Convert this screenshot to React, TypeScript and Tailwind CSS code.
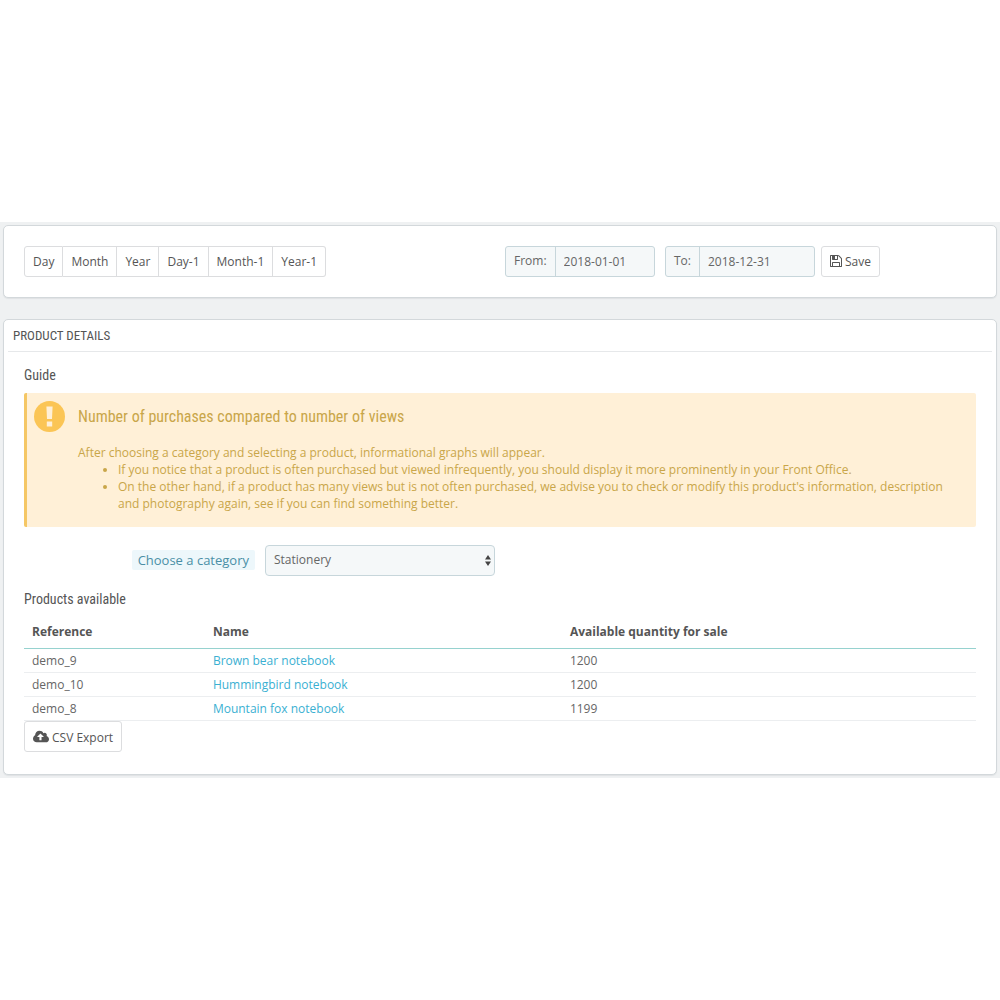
import React, { useState } from "react";

const ranges = ["Day", "Month", "Year", "Day-1", "Month-1", "Year-1"];

const products = [
    { reference: "demo_9", name: "Brown bear notebook", quantity: 1200 },
    { reference: "demo_10", name: "Hummingbird notebook", quantity: 1200 },
    { reference: "demo_8", name: "Mountain fox notebook", quantity: 1199 },
];

const panelStyle = "rounded-[5px] border border-[#d3d8db] bg-white shadow-[0_1px_1px_#dfe2e4]";
const buttonStyle =
    "flex h-[31px] cursor-pointer items-center gap-[3px] rounded-[3px] border border-[#dcdddf] bg-white px-2 pt-0.5 text-[#555] hover:bg-gray-50";
const condensed = "font-['Ubuntu_Condensed','Roboto_Condensed',sans-serif] font-normal";
const headingStyle = `${condensed} text-[#555]`;

function SaveIcon() {
    return (
        <svg className="mb-0.5 size-3" viewBox="0 128 1536 1536" fill="currentColor" aria-hidden="true">
            <path d="M384 1536h768v-384h-768v384zm896 0h128v-896q0-14-10-38.5t-20-34.5l-281-281q-10-10-34-20t-39-10v416q0 40-28 68t-68 28h-576q-40 0-68-28t-28-68v-416h-128v1280h128v-416q0-40 28-68t68-28h832q40 0 68 28t28 68v416zm-384-928v-320q0-13-9.5-22.5t-22.5-9.5h-192q-13 0-22.5 9.5t-9.5 22.5v320q0 13 9.5 22.5t22.5 9.5h192q13 0 22.5-9.5t9.5-22.5zm640 32v928q0 40-28 68t-68 28h-1344q-40 0-68-28t-28-68v-1344q0-40 28-68t68-28h928q40 0 88 20t76 48l280 280q28 28 48 76t20 88z" />
        </svg>
    );
}

function CloudUploadIcon() {
    return (
        <svg className="mb-0.5 h-[15px] w-4" viewBox="0 0 1920 1792" fill="currentColor" aria-hidden="true">
            <path d="M1280 928q0-14-9-23l-352-352q-9-9-23-9t-23 9l-351 351q-10 12-10 24 0 14 9 23t23 9h224v352q0 13 9.5 22.5t22.5 9.5h192q13 0 22.5-9.5t9.5-22.5v-352h224q13 0 22.5-9.5t9.5-22.5zm640 288q0 159-112.5 271.5t-271.5 112.5h-1088q-185 0-316.5-131.5t-131.5-316.5q0-130 70-240t188-165q-2-30-2-43 0-212 150-362t362-150q156 0 285.5 87t188.5 231q71-62 166-62 106 0 181 75t75 181q0 76-41 138 130 31 213.5 135.5t83.5 238.5z" />
        </svg>
    );
}

function WarningIcon() {
    return (
        <svg className="size-[31px] shrink-0" viewBox="0 0 31 31" aria-hidden="true">
            <circle cx="15.5" cy="15.5" r="15.5" fill="#fbc555" />
            <path d="M12.4 5.5h6.2l-.6 12.6h-5zM12.8 20.4h5.4v5.2h-5.4z" fill="#fff0d7" />
        </svg>
    );
}

type DateFieldProps = { id: string; label: string; initial: string };

function DateField({ id, label, initial }: DateFieldProps) {
    const [value, setValue] = useState(initial);
    return (
        <div className="flex h-[31px] w-[150px] rounded-[3px] border border-[#c7d6db] bg-[#f5f8f9] text-[#666]">
            <label htmlFor={id} className="flex items-center border-r border-[#c7d6db] px-2">
                {label}
            </label>
            <input
                id={id}
                type="text"
                value={value}
                onChange={(e) => setValue(e.target.value)}
                className="w-full min-w-0 px-2 pt-0.5 outline-none"
            />
        </div>
    );
}

function Toolbar() {
    return (
        <div className={`${panelStyle} grid gap-[10px] px-5 py-5 md:grid-cols-2`}>
            <div className="flex">
                {ranges.map((range) => (
                    <button
                        key={range}
                        type="button"
                        className="h-[31px] cursor-pointer border-y border-r border-[#dcdddf] px-2 pt-0.5 text-[#555] first:rounded-l-[3px] first:border-l last:rounded-r-[3px] hover:bg-gray-50"
                    >
                        {range}
                    </button>
                ))}
            </div>
            <form className="flex" onSubmit={(e) => e.preventDefault()}>
                <div className="mr-[6px] flex gap-[10px]">
                    <DateField id="date-from" label="From:" initial="2018-01-01" />
                    <DateField id="date-to" label="To:" initial="2018-12-31" />
                </div>
                <button type="submit" className={buttonStyle}>
                    <SaveIcon />
                    Save
                </button>
            </form>
        </div>
    );
}

function Guide() {
    return (
        <div className="flex gap-[13px] rounded-[2px] border-l-[3px] border-[#f5c765] bg-[#fff0d7] pt-2 pr-5 pb-[15px] pl-[7px] text-[#c9a649]">
            <WarningIcon />
            <div className="leading-[17px]">
                <h4 className={`${condensed} mt-1 mb-[15px] text-[16px] leading-6`}>
                    Number of purchases compared to number of views
                </h4>
                <p>After choosing a category and selecting a product, informational graphs will appear.</p>
                <ul className="list-disc pl-10">
                    <li>
                        If you notice that a product is often purchased but viewed infrequently, you should display it
                        more prominently in your Front Office.
                    </li>
                    <li>
                        On the other hand, if a product has many views but is not often purchased, we advise you to
                        check or modify this product's information, description and photography again, see if you can
                        find something better.
                    </li>
                </ul>
            </div>
        </div>
    );
}

function CategoryFilter() {
    return (
        <div className="flex items-center pt-[18px]">
            <div className="flex w-[231px] justify-end">
                <label htmlFor="category" className="rounded-[2px] bg-[#edf7fb] px-[6px] text-[13px] leading-5 text-[#4a8fa6]">
                    Choose a category
                </label>
            </div>
            <div className="relative ml-[10px] w-[230px]">
                <select
                    id="category"
                    defaultValue="Stationery"
                    className="h-[31px] w-full appearance-none rounded-[4px] border border-[#c7d6db] bg-[#f5f8f9] px-2 text-[#666]"
                >
                    <option>Stationery</option>
                    <option>Art</option>
                    <option>Accessories</option>
                </select>
                <svg
                    className="pointer-events-none absolute top-[10px] right-1 h-[11px] w-[6px]"
                    viewBox="0 0 6 11"
                    fill="#444"
                    aria-hidden="true"
                >
                    <path d="M3 0l3 4.5H0zM3 11L0 6.5h6z" />
                </svg>
            </div>
        </div>
    );
}

function ProductsTable() {
    const thStyle = "border-b border-[#96d2cf] px-2 font-bold";
    return (
        <table className="w-full table-fixed text-left">
            <thead>
                <tr className="h-[34px] text-[#555]">
                    <th className={`${thStyle} w-[19%]`}>Reference</th>
                    <th className={`${thStyle} w-3/8`}>Name</th>
                    <th className={thStyle}>Available quantity for sale</th>
                </tr>
            </thead>
            <tbody>
                {products.map((product) => (
                    <tr key={product.reference} className="h-6 border-b border-[#eceef0] text-[#666]">
                        <td className="px-2">{product.reference}</td>
                        <td className="px-2">
                            <a href="#" className="text-[#3ab0d2] hover:underline">
                                {product.name}
                            </a>
                        </td>
                        <td className="px-2">{product.quantity}</td>
                    </tr>
                ))}
            </tbody>
        </table>
    );
}

function App() {
    return (
        <main className="flex min-h-screen flex-col justify-center bg-white font-['Open_Sans','Noto_Sans',sans-serif] text-[12px] leading-4">
            <div className="flex flex-col gap-[21px] bg-[#eff1f2] p-[3px]">
                <Toolbar />
                <section className={`${panelStyle} px-1 pb-[22px]`}>
                    <h3 className={`${headingStyle} border-b border-[#e6e8ea] px-[5px] text-[13px] leading-[31px] uppercase`}>
                        Product details
                    </h3>
                    <div className="px-4">
                        <h4 className={`${headingStyle} pt-[13px] pb-2 text-[14px] leading-5`}>Guide</h4>
                        <Guide />
                        <CategoryFilter />
                        <h4 className={`${headingStyle} pt-[13px] pb-[6px] text-[14px] leading-5`}>
                            Products available
                        </h4>
                        <ProductsTable />
                        <button type="button" className={buttonStyle}>
                            <CloudUploadIcon />
                            CSV Export
                        </button>
                    </div>
                </section>
            </div>
        </main>
    );
}

export default App;
